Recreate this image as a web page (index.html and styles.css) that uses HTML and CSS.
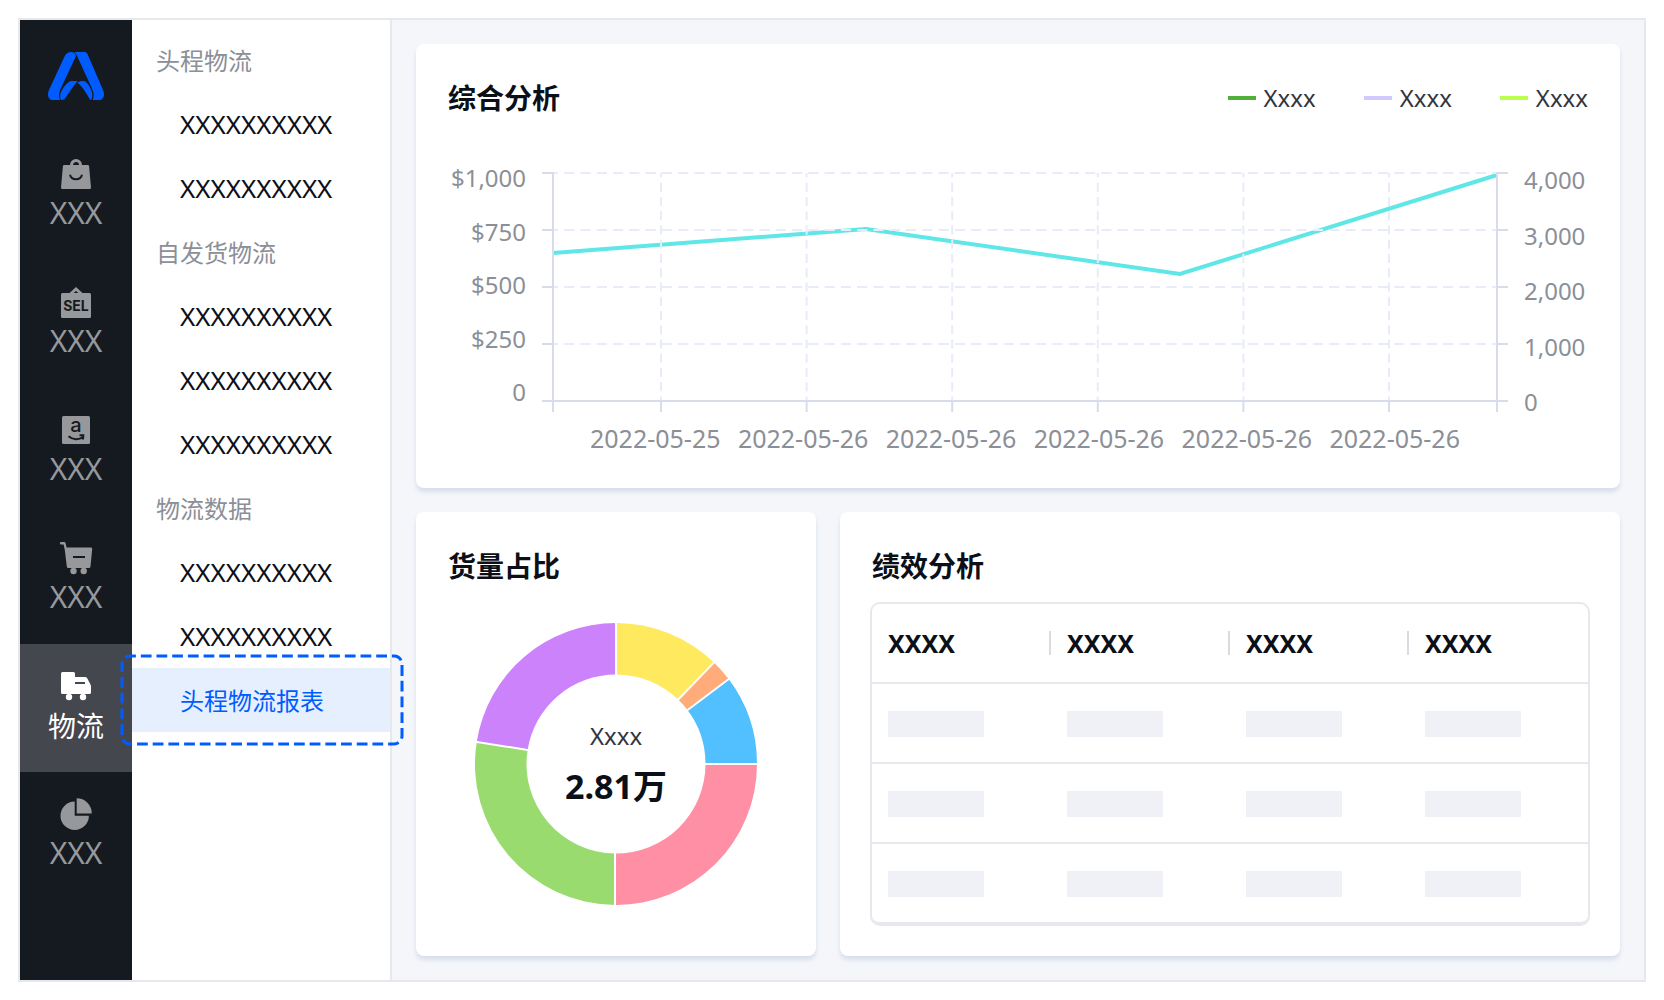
FILE: index.html
```html
<!DOCTYPE html>
<html lang="zh-CN">
<head>
<meta charset="utf-8">
<meta name="viewport" content="width=device-width, initial-scale=1">
<title>头程物流报表</title>
<link rel="stylesheet" href="styles.css">
</head>
<body>
<div class="app">
  <nav class="rail" aria-label="主导航">
    <svg class="logo" viewBox="0 0 56 48" aria-hidden="true">
      <path d="M23 0C20 0 18 1.500 16.500 4.500L1 38C-1.500 43.500 1 48 5 48H12C10.600 44 11 40 13 36L28 4C27.500 1 26 0 23 0Z"/>
      <path d="M26.500 0H37C38.300 0 39 1 39.700 2.500L55 38C57.500 43.500 55 48 51 48H44.500C46.200 45 46 41 44 36.500L29.300 4.500C28.700 3 27.800 1.300 26.500 0Z"/>
      <path d="M19.500 31C21 29.500 22.500 29 24 29H30C27 31.500 26 33.500 23.500 37L17 46.500C16 48 14.500 48 13 48C11.500 45 12 42 13.500 39C15 36 17 33 19.500 31Z"/>
      <path d="M29.500 30.800C31 29.300 33 29 35 29C39 29.300 41 33 43 37.500C44.700 41.500 45 45 43 48L42 47.500C38 41 34.500 34.500 29.500 30.800Z"/>
    </svg>
    <a class="rail-item" href="#">
      <svg class="rail-icon" viewBox="0 0 36 36" aria-hidden="true">
        <circle cx="18" cy="9" r="4.500" fill="none" stroke="currentColor" stroke-width="3"/>
        <path fill="currentColor" d="M6.300 9H29.700Q31 9 31.100 10.300L33 31.500Q33 33 31.600 33H4.400Q3 33 3 31.500L4.900 10.300Q5 9 6.300 9Z"/>
        <path class="cut" d="M12 18.800C13.500 24.800 22.500 24.800 24 18.800"/>
      </svg>
      <span>XXX</span>
    </a>
    <a class="rail-item" href="#">
      <svg class="rail-icon" viewBox="0 0 36 36" aria-hidden="true">
        <path d="M12 10.500L18 5L24 10.500" fill="none" stroke="currentColor" stroke-width="3"/>
        <rect x="3" y="9" width="30" height="25" rx="1.500" fill="currentColor"/>
        <text class="icon-text" x="18" y="27" font-size="14">SEL</text>
      </svg>
      <span>XXX</span>
    </a>
    <a class="rail-item" href="#">
      <svg class="rail-icon" viewBox="0 0 36 36" aria-hidden="true">
        <rect x="4" y="4" width="28" height="28" rx="1.500" fill="currentColor"/>
        <text class="icon-text icon-letter" x="18" y="20" font-size="20">a</text>
        <path class="cut" d="M10.500 24.200C15 28 21 28 25 25M21.500 23.200L25.300 23.300L25 27.500"/>
      </svg>
      <span>XXX</span>
    </a>
    <a class="rail-item" href="#">
      <svg class="rail-icon" viewBox="0 0 36 36" aria-hidden="true">
        <path fill="currentColor" d="M2.500 2H6.300Q7.300 2 7.500 3L8.600 7.500H33Q34.400 7.500 34.200 9L32.500 26.500Q32.300 28 31 28H10.300Q9 28 8.800 26.500L6.800 10L5.600 4.600H2.500Q1.200 3.300 2.500 2Z"/>
        <path class="cut" d="M15 17H27"/>
        <circle cx="15.500" cy="31" r="3.200" fill="currentColor"/>
        <circle cx="25.700" cy="31" r="3.200" fill="currentColor"/>
      </svg>
      <span>XXX</span>
    </a>
    <a class="rail-item rail-item--active" href="#" aria-current="page">
      <svg class="rail-icon" viewBox="0 0 36 36" aria-hidden="true">
        <path fill="currentColor" d="M4.500 4H15.500Q17 4 17 5.500V9H27Q28.500 9 29.200 10.300L32.500 16.500Q33 17.500 33 18.500V24.500Q33 26 31.500 26H4.500Q3 26 3 24.500V5.500Q3 4 4.500 4Z"/>
        <path class="cut" d="M17 15H27"/>
        <circle cx="11" cy="29" r="3.200" fill="currentColor"/>
        <circle cx="25" cy="29" r="3.200" fill="currentColor"/>
      </svg>
      <span>物流</span>
    </a>
    <a class="rail-item" href="#">
      <svg class="rail-icon" viewBox="0 0 36 36" aria-hidden="true">
        <path fill="currentColor" d="M16.700 5.500A14.200 14.200 0 1 0 30.900 19.700H16.700Z"/>
        <path fill="currentColor" d="M18.700 2.200A15 15 0 0 1 33.700 17.500H18.700Z"/>
      </svg>
      <span>XXX</span>
    </a>
  </nav>

  <nav class="menu" aria-label="物流">
    <h2 class="menu-title">头程物流</h2>
    <a class="menu-item" href="#">XXXXXXXXXX</a>
    <a class="menu-item" href="#">XXXXXXXXXX</a>
    <h2 class="menu-title">自发货物流</h2>
    <a class="menu-item" href="#">XXXXXXXXXX</a>
    <a class="menu-item" href="#">XXXXXXXXXX</a>
    <a class="menu-item" href="#">XXXXXXXXXX</a>
    <h2 class="menu-title">物流数据</h2>
    <a class="menu-item" href="#">XXXXXXXXXX</a>
    <a class="menu-item" href="#">XXXXXXXXXX</a>
    <a class="menu-item menu-item--active" href="#" aria-current="page">头程物流报表
      <svg class="highlight" viewBox="0 0 284 92" aria-hidden="true">
        <rect x="2" y="2" width="280" height="88" rx="8" pathLength="736"/>
      </svg>
    </a>
  </nav>

  <main class="board">
    <section class="card card--wide">
      <header class="card-head">
        <h1 class="card-title">综合分析</h1>
        <ul class="legend">
          <li class="legend-item"><i class="swatch swatch--green"></i>Xxxx</li>
          <li class="legend-item"><i class="swatch swatch--violet"></i>Xxxx</li>
          <li class="legend-item"><i class="swatch swatch--lime"></i>Xxxx</li>
        </ul>
      </header>
      <div class="chart">
        <div class="axis axis--left"><span>$1,000</span><span>$750</span><span>$500</span><span>$250</span><span>0</span></div>
        <div class="plot">
          <svg class="plot-svg" viewBox="0 0 966 240" preserveAspectRatio="none" aria-hidden="true">
            <polyline class="series" points="11,81 324,57 638,102 955,3"/>
            <g class="grid-h">
              <path pathLength="928" d="M11 1H955"/>
              <path pathLength="928" d="M11 58H955"/>
              <path pathLength="928" d="M11 115H955"/>
              <path pathLength="928" d="M11 172H955"/>
            </g>
            <g class="grid-v">
              <path pathLength="256" d="M119 1V229"/>
              <path pathLength="256" d="M264.600 1V229"/>
              <path pathLength="256" d="M410.200 1V229"/>
              <path pathLength="256" d="M555.800 1V229"/>
              <path pathLength="256" d="M701.400 1V229"/>
              <path pathLength="256" d="M847 1V229"/>
            </g>
            <path class="axis-line" d="M11 0V240M955 0V240M0 229H966M0 1H11M0 58H11M0 115H11M0 172H11M955 1H966M955 58H966M955 115H966M955 172H966M119 229V240M264.600 229V240M410.200 229V240M555.800 229V240M701.400 229V240M847 229V240"/>
          </svg>
          <div class="dates"><span>2022-05-25</span><span>2022-05-26</span><span>2022-05-26</span><span>2022-05-26</span><span>2022-05-26</span><span>2022-05-26</span></div>
        </div>
        <div class="axis axis--right"><span>4,000</span><span>3,000</span><span>2,000</span><span>1,000</span><span>0</span></div>
      </div>
    </section>

    <section class="card">
      <h2 class="card-title">货量占比</h2>
      <div class="donut">
        <svg class="donut-svg" viewBox="-141 -141 282 282" aria-hidden="true">
          <path fill="#ffe95e" d="M0 -141A141 141 0 0 1 97.900 -101.400L62.200 -64.400A89.500 89.500 0 0 0 0 -89.500Z"/>
          <path fill="#ffac7a" d="M97.900 -101.400A141 141 0 0 1 112.600 -84.900L71.500 -53.900A89.500 89.500 0 0 0 62.200 -64.400Z"/>
          <path fill="#52bfff" d="M112.600 -84.900A141 141 0 0 1 141 0H89.500A89.500 89.500 0 0 0 71.500 -53.900Z"/>
          <path fill="#ff8fa4" d="M141 0A141 141 0 0 1 -1 141V89.500A89.500 89.500 0 0 0 89.500 0Z"/>
          <path fill="#9adb70" d="M-1 141A141 141 0 0 1 -139.300 -22.100L-88.400 -14A89.500 89.500 0 0 0 -1 89.500Z"/>
          <path fill="#cb82fa" d="M-139.300 -22.100A141 141 0 0 1 0 -141V-89.500A89.500 89.500 0 0 0 -88.400 -14Z"/>
          <path class="gaps" d="M0 -88V-142M60.800 -63L99 -102.600M70.300 -53L113.800 -85.800M88 0H142M-1 88V142M-86.900 -13.800L-140.600 -22.300"/>
        </svg>
        <div class="donut-label"><span class="donut-name">Xxxx</span><strong class="donut-value">2.81万</strong></div>
      </div>
    </section>

    <section class="card">
      <h2 class="card-title">绩效分析</h2>
      <table class="table">
        <thead>
          <tr><th scope="col"><span>XXXX</span></th><th scope="col"><span>XXXX</span></th><th scope="col"><span>XXXX</span></th><th scope="col"><span>XXXX</span></th></tr>
        </thead>
        <tbody>
          <tr><td><i></i></td><td><i></i></td><td><i></i></td><td><i></i></td></tr>
          <tr><td><i></i></td><td><i></i></td><td><i></i></td><td><i></i></td></tr>
          <tr><td><i></i></td><td><i></i></td><td><i></i></td><td><i></i></td></tr>
        </tbody>
      </table>
    </section>
  </main>
</div>
</body>
</html>
```
FILE: styles.css
```css
* {
  box-sizing: border-box;
}

body {
  margin: 0;
  padding: 18px;
  background: #fff;
  color: #0b0f17;
  font-family: "Noto Sans", "Noto Sans CJK SC", sans-serif;
  font-size: 24px;
  line-height: 32px;
}

h1, h2, ul {
  margin: 0;
  padding: 0;
}

a {
  color: inherit;
  text-decoration: none;
}

.app {
  display: flex;
  min-height: calc(100vh - 36px);
  border: 2px solid #e6e8ed;
}

/* Icon rail */
.rail {
  flex: none;
  display: flex;
  flex-direction: column;
  width: 112px;
  padding-top: 32px;
  background: #141a20;
  color: #97989b;
}

.logo {
  align-self: center;
  width: 56px;
  height: 48px;
  margin-bottom: 32px;
  fill: #005cff;
}

.rail-item {
  --rail-bg: #141a20;
  display: flex;
  flex-direction: column;
  align-items: center;
  gap: 4px;
  height: 128px;
  padding-top: 24px;
  background: var(--rail-bg);
  font-size: 30px;
  line-height: 34px;
}

.rail-item--active {
  --rail-bg: #45474f;
  color: #fff;
  font-size: 28px;
  line-height: 36px;
}

.rail-icon {
  width: 36px;
  height: 36px;
}

.cut {
  fill: none;
  stroke: var(--rail-bg);
  stroke-width: 2;
}

.icon-text {
  fill: var(--rail-bg);
  font-family: Inter, sans-serif;
  font-weight: 700;
  text-anchor: middle;
}

.icon-letter {
  font-weight: 500;
}

/* Section menu */
.menu {
  flex: none;
  width: 260px;
  padding-top: 8px;
  border-right: 2px solid #e6e8ed;
}

.menu-title {
  height: 64px;
  padding-left: 24px;
  color: #8b8f97;
  font-size: 24px;
  font-weight: 400;
  line-height: 66px;
}

.menu-item {
  display: block;
  height: 64px;
  padding-left: 48px;
  font-size: 26px;
  line-height: 64px;
}

.menu-item--active {
  position: relative;
  background: #e6effe;
  color: #005cff;
  font-size: 24px;
  line-height: 66px;
}

.highlight {
  position: absolute;
  top: -14px;
  left: -12px;
  width: 284px;
  height: 92px;
  fill: none;
  stroke: #005cff;
  stroke-width: 3;
  stroke-dasharray: 11 5;
  stroke-dashoffset: 5;
}

/* Dashboard */
.board {
  flex: 1;
  display: grid;
  grid-template-columns: 400px 1fr;
  grid-template-rows: 1fr 1fr;
  gap: 24px;
  min-width: 0;
  padding: 24px;
  background: #f4f6fa;
}

.card {
  min-width: 0;
  padding: 32px;
  border-radius: 8px;
  background: #fff;
  box-shadow: 0 4px 4px #d8deea;
}

.card--wide {
  grid-column: 1 / -1;
}

.card-head {
  display: flex;
  justify-content: space-between;
  align-items: center;
}

.card-title {
  font-size: 28px;
  font-weight: 700;
  line-height: 44px;
}

.legend {
  display: flex;
  gap: 48px;
  color: #33353d;
  list-style: none;
}

.legend-item {
  display: flex;
  align-items: center;
  gap: 8px;
}

.swatch {
  width: 28px;
  height: 4px;
}

.swatch--green {
  background: #52b03a;
}

.swatch--violet {
  background: #d3c8ff;
}

.swatch--lime {
  background: #bbff4d;
}

/* Line chart */
.chart {
  display: grid;
  grid-template-columns: 78px 1fr 64px;
  column-gap: 16px;
  align-items: start;
  margin-top: 42px;
  color: #8b8f97;
}

.axis {
  display: flex;
  flex-direction: column;
  justify-content: space-between;
}

.axis--left {
  height: 246px;
  text-align: right;
}

.axis--right {
  height: 254px;
  margin-top: 2px;
}

.plot {
  min-width: 0;
  padding-top: 10px;
}

.plot-svg {
  display: block;
  width: 100%;
  height: 240px;
  fill: none;
}

.series {
  stroke: #5fe6e6;
  stroke-width: 4;
}

.grid-h,
.grid-v {
  stroke: #e8ecf8;
  stroke-width: 2;
  stroke-dasharray: 10 6;
  stroke-dashoffset: 5;
}

.axis-line {
  stroke: #d8dcea;
  stroke-width: 2;
}

.dates {
  display: flex;
  justify-content: space-between;
  padding: 10px 48px 0;
  font-size: 25px;
}

/* Donut chart */
.donut {
  display: grid;
  place-items: center;
  margin-top: 35px;
}

.donut-svg,
.donut-label {
  grid-area: 1 / 1;
}

.donut-svg {
  width: 282px;
  height: 282px;
}

.gaps {
  stroke: #fff;
  stroke-width: 2;
}

.donut-label {
  display: flex;
  flex-direction: column;
  align-items: center;
  gap: 12px;
}

.donut-name {
  color: #33353d;
}

.donut-value {
  font-size: 34px;
  line-height: 44px;
}

/* Table */
.table {
  width: 100%;
  margin-top: 16px;
  border-spacing: 0;
  border-radius: 8px;
  box-shadow: 0 0 0 2px #e6e8ed;
  table-layout: fixed;
}

.table th,
.table td {
  height: 80px;
  padding: 27px 0 0 16px;
  border-bottom: 2px solid #e6e8ed;
  text-align: left;
  vertical-align: top;
}

.table tr:last-child td:first-child {
  border-bottom-left-radius: 8px;
}

.table tr:last-child td:last-child {
  border-bottom-right-radius: 8px;
}

.table th span {
  display: block;
  border-right: 2px solid #d9dbe1;
  font-size: 25px;
  line-height: 24px;
}

.table th:last-child span {
  border-right: 0;
}

.table i {
  display: block;
  width: 96px;
  height: 26px;
  background: #f0f1f6;
}
```
